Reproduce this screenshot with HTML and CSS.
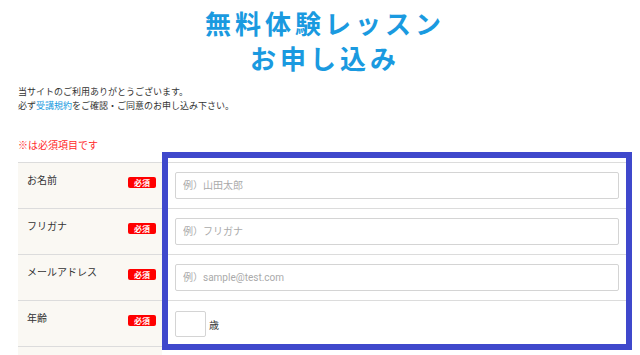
FILE: index.html
```html
<!DOCTYPE html>
<html lang="ja">
<head>
<meta charset="utf-8">
<title>無料体験レッスン お申し込み</title>
<link rel="stylesheet" href="styles.css">
</head>
<body>
<div class="page">
  <h1 class="title">無料体験レッスン<br>お申し込み</h1>
  <p class="intro">当サイトのご利用ありがとうございます。<br>必ず<a class="link" href="#">受講規約</a>をご確認・ご同意のお申し込み下さい。</p>
  <p class="note">※は必須項目です</p>
  <table class="form">
    <tr>
      <th class="label"><div class="label-in"><span>お名前</span><span class="req">必須</span></div></th>
      <td class="field"><input class="text" type="text" placeholder="例）山田太郎"></td>
    </tr>
    <tr>
      <th class="label"><div class="label-in"><span>フリガナ</span><span class="req">必須</span></div></th>
      <td class="field"><input class="text" type="text" placeholder="例）フリガナ"></td>
    </tr>
    <tr>
      <th class="label"><div class="label-in"><span>メールアドレス</span><span class="req">必須</span></div></th>
      <td class="field"><input class="text" type="text" placeholder="例）sample@test.com"></td>
    </tr>
    <tr>
      <th class="label"><div class="label-in"><span>年齢</span><span class="req">必須</span></div></th>
      <td class="field"><div class="age"><input class="short" type="text"><span class="unit">歳</span></div></td>
    </tr>
    <tr>
      <th class="label"></th>
      <td class="field"><input class="text" type="text"></td>
    </tr>
  </table>
</div>
<div class="highlight"></div>
</body>
</html>
```
FILE: styles.css
```css
* { box-sizing: border-box; }
html, body { margin: 0; padding: 0; background: #fff; }
body {
  font-family: Roboto, "Noto Sans CJK JP", sans-serif;
  color: #333;
  overflow: hidden;
  height: 355px;
}
.page {
  padding: 0 12px 0 18px;
}
.title {
  margin: 0;
  padding-top: 5px;
  text-align: center;
  font-size: 26px;
  line-height: 35px;
  letter-spacing: 4px;
  padding-left: 4px;
  font-weight: 700;
  color: #1a9ae0;
  font-family: "Noto Sans CJK JP", sans-serif;
}
.intro {
  margin: 10px 0 0;
  font-size: 9px;
  line-height: 14px;
  color: #333;
  font-family: "Noto Sans CJK JP", sans-serif;
}
.link { color: #1a9ae0; text-decoration: none; }
.note {
  margin: 25px 0 0;
  font-size: 10px;
  line-height: 14px;
  color: #ff2a2a;
  font-family: "Noto Sans CJK JP", sans-serif;
}
.form {
  margin-top: 10px;
  width: 610px;
  border-collapse: collapse;
  font-size: 10px;
}
.form tr { border-top: 1px solid #dcdcdc; }
.label {
  width: 144px;
  background: #faf8f3;
  font-weight: 400;
  text-align: left;
  vertical-align: top;
  padding: 10px 6px 0 9px;
  height: 45px;
}
.label-in {
  display: flex;
  justify-content: space-between;
  align-items: flex-start;
  line-height: 14px;
  font-family: "Noto Sans CJK JP", sans-serif;
}
.req {
  margin-top: 4px;
  width: 28px;
  height: 11px;
  background: #ff0000;
  color: #fff;
  border-radius: 2px;
  font-size: 8px;
  line-height: 11px;
  font-weight: 700;
  text-align: center;
}
.field {
  padding: 9px 9px 9px 13px;
  vertical-align: top;
}
.text {
  display: block;
  width: 100%;
  height: 27px;
  border: 1px solid #d4d4d4;
  border-radius: 2px;
  padding: 0 7px;
  font-size: 10px;
  font-family: Roboto, "Noto Sans CJK JP", sans-serif;
  color: #333;
  background: #fff;
}
.text::placeholder { color: #aaa; }
.age {
  display: flex;
  align-items: center;
  gap: 3px;
  padding-top: 1px;
}
.short {
  width: 31px;
  height: 26px;
  border: 1px solid #d4d4d4;
  border-radius: 2px;
  background: #fff;
}
.unit {
  font-size: 10px;
  color: #333;
  font-family: "Noto Sans CJK JP", sans-serif;
}
.highlight {
  position: absolute;
  left: 162px;
  top: 152px;
  width: 470px;
  height: 198px;
  border: 6px solid #3f48cc;
  pointer-events: none;
}
```
